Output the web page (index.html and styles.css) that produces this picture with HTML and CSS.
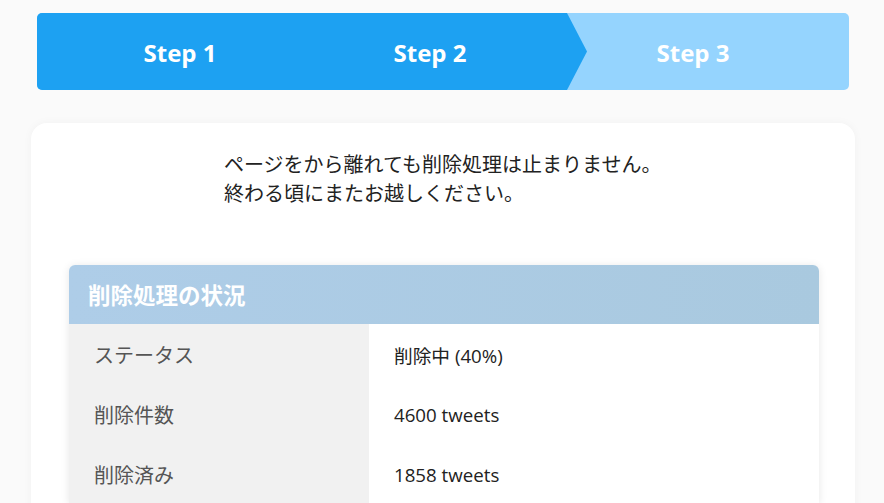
FILE: index.html
```html
<!DOCTYPE html>
<html lang="ja">
<head>
<meta charset="utf-8">
<title>削除処理の状況</title>
<link rel="stylesheet" href="styles.css">
</head>
<body>
<div class="page">
  <div class="steps">
    <div class="step step-first done">Step 1</div>
    <div class="step step-second done current">Step 2</div>
    <div class="step step-third">Step 3</div>
  </div>
  <div class="card">
    <p class="message">ページをから離れても削除処理は止まりません。<br>終わる頃にまたお越しください。</p>
    <div class="status">
      <div class="status-head">削除処理の状況</div>
      <div class="status-row">
        <div class="status-label">ステータス</div>
        <div class="status-value">削除中 (40%)</div>
      </div>
      <div class="status-row">
        <div class="status-label">削除件数</div>
        <div class="status-value">4600 tweets</div>
      </div>
      <div class="status-row">
        <div class="status-label">削除済み</div>
        <div class="status-value">1858 tweets</div>
      </div>
    </div>
  </div>
</div>
</body>
</html>
```

FILE: styles.css
```css
html, body {
  margin: 0;
  padding: 0;
  background: #fafafa;
  font-family: "Open Sans", "Noto Sans CJK JP", sans-serif;
  color: #222;
  overflow: hidden;
}

.page {
  width: 824px;
  margin-left: 31px;
  padding-top: 13px;
}

.steps {
  display: flex;
  height: 77px;
  margin: 0 6px;
  border-radius: 5px;
  overflow: hidden;
  background: #95d4fe;
}

.step {
  display: flex;
  align-items: center;
  justify-content: center;
  padding-top: 2px;
  color: #fff;
  font-weight: 700;
  font-size: 24px;
  box-sizing: border-box;
}

.step.done {
  background: #1da1f2;
}

.step-first {
  width: 286px;
}

.step-second {
  width: 244px;
  padding-right: 30px;
  position: relative;
}

.step-second::after {
  content: "";
  position: absolute;
  top: 0;
  right: -20px;
  width: 20px;
  height: 100%;
  background: #1da1f2;
  clip-path: polygon(0 0, 100% 50%, 0 100%);
}

.step-third {
  flex: 1;
  padding-right: 30px;
}

.card {
  margin-top: 33px;
  background: #fff;
  border-radius: 16px;
  box-shadow: 0 0 10px rgba(0, 0, 0, 0.04);
  padding: 27px 36px 40px 38px;
  min-height: 400px;
}

.message {
  margin: 0 0 57px 155px;
  font-size: 20px;
  line-height: 29px;
  color: #222;
}

.status {
  border-radius: 6px 6px 0 0;
  overflow: hidden;
  box-shadow: 0 1px 8px rgba(0, 0, 0, 0.1);
}

.status-head {
  height: 59px;
  display: flex;
  align-items: center;
  padding-left: 19px;
  background: linear-gradient(90deg, #aecde8, #a9c9df);
  color: #fff;
  font-weight: 700;
  font-size: 22.5px;
}

.status-row {
  display: flex;
  height: 60px;
}

.status-label {
  width: 300px;
  box-sizing: border-box;
  padding-left: 25px;
  background: #f1f1f1;
  color: #555;
  font-size: 20px;
  display: flex;
  align-items: center;
}

.status-value {
  flex: 1;
  padding-left: 25px;
  background: #fff;
  color: #222;
  font-size: 18.7px;
  display: flex;
  align-items: center;
}
```
